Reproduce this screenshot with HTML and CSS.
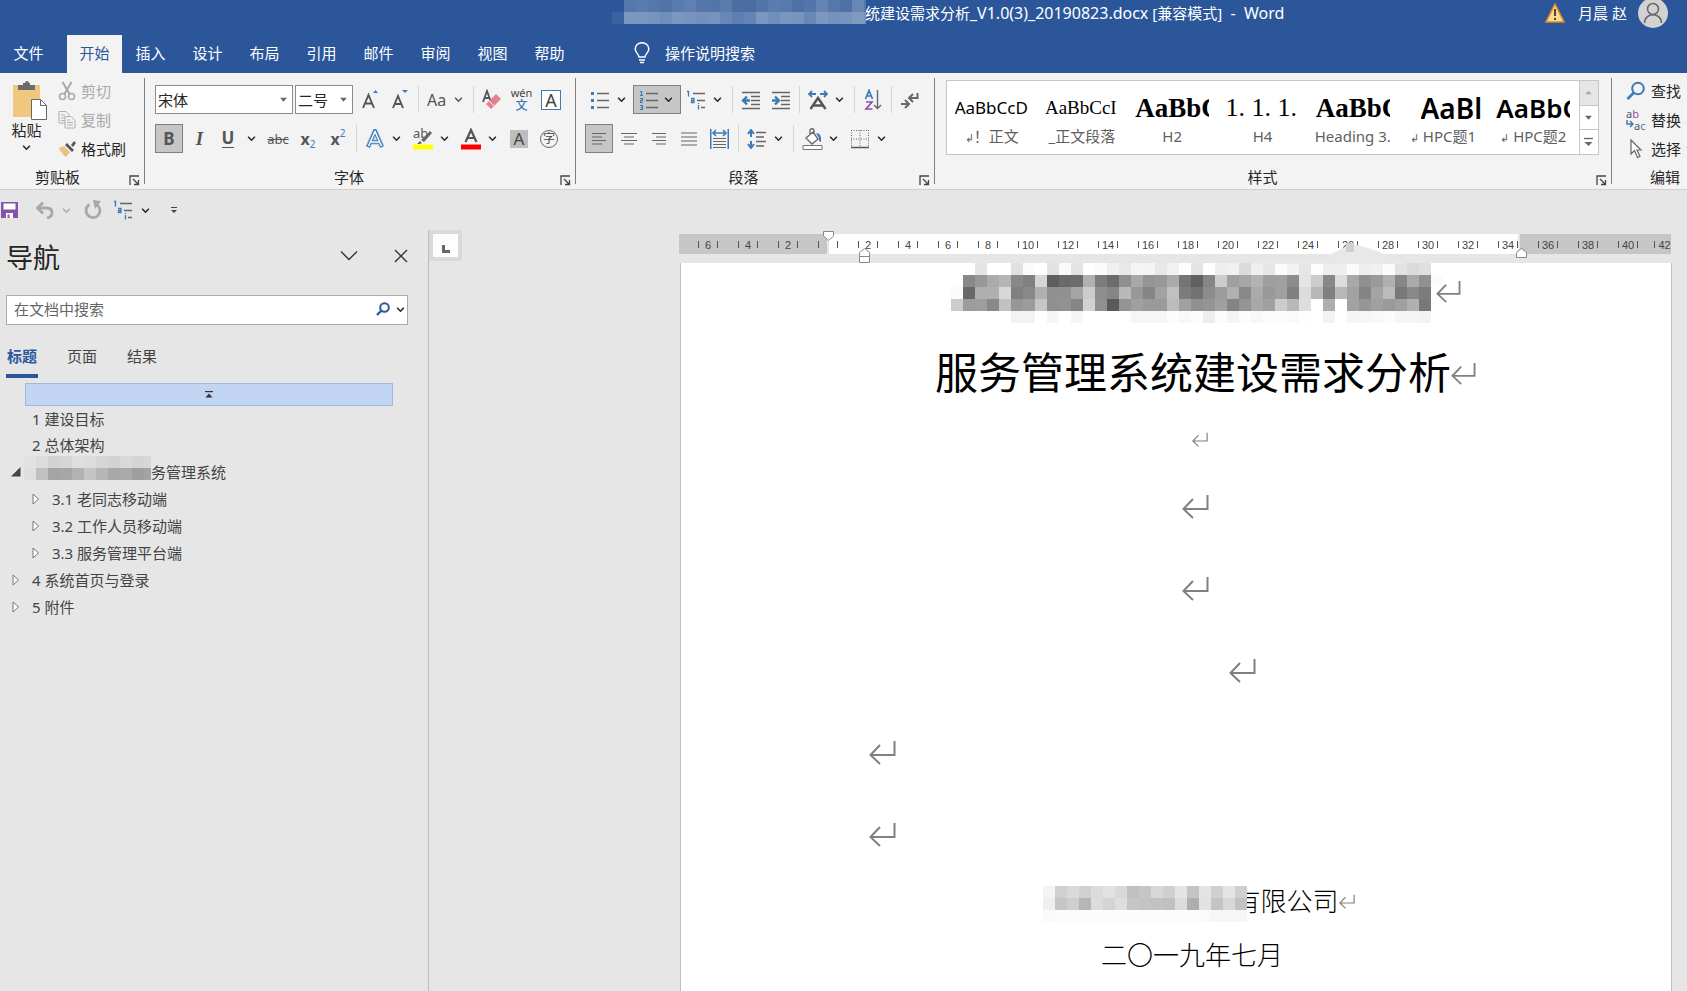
FILE: index.html
```html
<!DOCTYPE html>
<html lang="zh-CN">
<head>
<meta charset="utf-8">
<title>统建设需求分析_V1.0(3)_20190823.docx - Word</title>
<link rel="stylesheet" href="styles.css">
</head>
<body>
<svg class="defs" aria-hidden="true">
  <symbol id="chev" viewBox="0 0 8 8"><path d="M1 2.5l3 3 3-3" fill="none" stroke="currentColor" stroke-width="1.4"/></symbol>
  <symbol id="down" viewBox="0 0 8 8"><path d="M1 2.5h6L4 6z" fill="currentColor"/></symbol>
  <symbol id="launch" viewBox="0 0 11 11"><path d="M1 10V1h9M4 4l5 5M9.5 5v4.5H5" fill="none" stroke="#444" stroke-width="1.3"/></symbol>
  <symbol id="mark" viewBox="0 0 27 25"><path d="M25.500 1v14H2M11 5L1.500 15l9.500 9" fill="none" stroke="#808080" stroke-width="2"/></symbol>
  <symbol id="multi" viewBox="0 0 20 20"><path d="M7 3.500h12M11 10.500h8M15 17.500h4" stroke="#666" stroke-width="1.300"/><path d="M1 1.500h1.500v5M5 8.500h3v4H5.500v-2H8M12.500 15v4.500M12.500 13v1" fill="none" stroke="#3f7ab5" stroke-width="1.300"/></symbol>
  <symbol id="tri" viewBox="0 0 8 12"><path d="M1 1l5.500 5L1 11z" fill="#fff" stroke="#777"/></symbol>
  <symbol id="lens" viewBox="0 0 20 20"><circle cx="12" cy="7.500" r="5.800" fill="none" stroke="currentColor" stroke-width="2"/><path d="M8 11.500L1.500 18" stroke="currentColor" stroke-width="2.600"/></symbol>
</svg>

<header class="titlebar">
  <svg class="mosaic title-mosaic" data-mosaic="title" width="254" height="26" aria-hidden="true"></svg>
  <h1 class="doc-name">统建设需求分析<span>_V1.0(3)_20190823.docx</span> [兼容模式]<span>&nbsp; -&nbsp; Word</span></h1>
  <div class="account">
    <svg width="20" height="20" viewBox="0 0 20 20"><path d="M10 1L19 19H1z" fill="#fbd98c" stroke="#e08a2c" stroke-width="1.600"/><path d="M10 6v7M10 15v2" stroke="#333" stroke-width="1.800"/></svg>
    <span>月晨 赵</span>
    <svg class="avatar" width="30" height="30" viewBox="0 0 30 30"><circle cx="15" cy="15" r="15" fill="#d2d2d2"/><circle cx="15" cy="11" r="5.500" fill="none" stroke="#666" stroke-width="1.500"/><path d="M6.500 25c0-11 17-11 17 0" fill="none" stroke="#666" stroke-width="1.500"/></svg>
  </div>
</header>

<nav class="tabs">
  <button class="tab file">文件</button>
  <button class="tab active">开始</button>
  <button class="tab">插入</button>
  <button class="tab">设计</button>
  <button class="tab">布局</button>
  <button class="tab">引用</button>
  <button class="tab">邮件</button>
  <button class="tab">审阅</button>
  <button class="tab">视图</button>
  <button class="tab">帮助</button>
  <button class="tell">
    <svg width="16" height="22" viewBox="0 0 16 22"><path d="M5 15c0-3-3.800-4-3.800-8a6.800 6.300 0 0 1 13.600 0c0 4-3.800 5-3.800 8zM5 18h6M6 20.500h4" fill="none" stroke="#fff" stroke-width="1.500"/></svg>
    操作说明搜索
  </button>
</nav>

<section class="ribbon">
  <div class="group clip">
    <div class="clip-body">
      <button class="paste">
        <svg width="36" height="40" viewBox="0 0 36 40"><path d="M1 4h27v32H1z" fill="#efc77d"/><path d="M6 9V4h5V2h2q0-2 2-2h0q2 0 2 2h1v2h5v5z" fill="#6b6b6b"/><path d="M19.500 18.500h9l6 6v14h-15z" fill="#fff" stroke="#666"/><path d="M28.500 18.500v6h6" fill="none" stroke="#666"/></svg>
        <span>粘贴</span>
        <svg width="9" height="9"><use href="#chev"/></svg>
      </button>
      <div class="clip-list">
        <button class="line off"><svg width="18" height="20" viewBox="0 0 18 20"><path d="M4.500 1l7 12M13.500 1l-7 12" stroke="#a9a9a9" stroke-width="2"/><circle cx="4.500" cy="15.500" r="3" fill="none" stroke="#a9a9a9" stroke-width="1.600"/><circle cx="13.500" cy="15.500" r="3" fill="none" stroke="#a9a9a9" stroke-width="1.600"/></svg>剪切</button>
        <button class="line off"><svg width="18" height="20" viewBox="0 0 18 20"><path d="M1 1.500h7l3 3V13H1zM3 5h4M3 8h5M3 10.500h5" fill="#f3f3f3" stroke="#b3adb5"/><path d="M7 6.500h6l4 4V18H7zM9 10h3M9 12.500h6M9 15h6" fill="#f3f3f3" stroke="#b3adb5"/></svg>复制</button>
        <button class="line"><svg width="18" height="18" viewBox="0 0 18 18"><path d="M1 8l5-2 6 6-4 5q-2-1-3-3l-1 0 0-2-2-1z" fill="#eac282"/><path d="M7 5l2-2 7 7-2 2zM13 5l3-4 2 2-3 4z" fill="#555"/></svg>格式刷</button>
      </div>
    </div>
    <footer class="foot"><span>剪贴板</span><button class="launch" aria-label="剪贴板选项"><svg width="11" height="11"><use href="#launch"/></svg></button></footer>
  </div>

  <div class="group font">
    <div class="row">
      <label class="combo wide"><input value="宋体" aria-label="字体名称"><svg width="9" height="9"><use href="#down"/></svg></label>
      <label class="combo"><input value="二号" aria-label="字号"><svg width="9" height="9"><use href="#down"/></svg></label>
      <button class="tool w30" aria-label="增大字号"><svg width="20" height="22" viewBox="0 0 20 22"><path d="M2 19L7.500 6 13 19M4 14.500h7" fill="none" stroke="#555" stroke-width="1.900"/><path d="M12 4l2.500-3L17 4z" fill="#3f7ab5"/></svg></button>
      <button class="tool" aria-label="减小字号"><svg width="20" height="22" viewBox="0 0 20 22"><path d="M2 19L7 7l5 12M4 15h6" fill="none" stroke="#555" stroke-width="1.900"/><path d="M11 1h6l-3 3z" fill="#3f7ab5"/></svg></button>
      <i class="sep"></i>
      <button class="split case"><span>Aa</span><svg width="9" height="9"><use href="#chev"/></svg></button>
      <i class="sep"></i>
      <button class="tool w30" aria-label="清除格式"><svg width="20" height="22" viewBox="0 0 20 22"><path d="M1 13L5 2l4 11M2.500 9h5" fill="none" stroke="#555" stroke-width="1.800"/><path d="M4 15L14 5l5 5L9 20z" fill="#e5808f"/><path d="M7 12l5 5" stroke="#f3f3f3"/></svg></button>
      <button class="tool pinyin"><small>wén</small><b>文</b></button>
      <button class="tool w30" aria-label="字符边框"><span class="boxed">A</span></button>
    </div>
    <div class="row">
      <button class="tool on"><b class="g">B</b></button>
      <button class="tool w33"><b class="g ital">I</b></button>
      <button class="tool under"><b class="g">U</b></button>
      <button class="tool w23" aria-label="下划线样式"><svg width="9" height="9"><use href="#chev"/></svg></button>
      <button class="tool w30"><s class="strike">abc</s></button>
      <button class="tool w30"><b class="x">x</b><sub>2</sub></button>
      <button class="tool w30"><b class="x">x</b><sup>2</sup></button>
      <i class="sep"></i>
      <button class="split"><svg width="20" height="20" viewBox="0 0 20 20"><path d="M3 18L10 2l7 16M6 13h8" fill="none" stroke="#b5d0ee" stroke-width="5.500"/><path d="M3 18L10 2l7 16M6 13h8" fill="none" stroke="#3f7ab5" stroke-width="3.600"/><path d="M3.500 17L10 2.500 16.500 17M6 13h8" fill="none" stroke="#fff" stroke-width="1.500"/></svg><svg width="9" height="9"><use href="#chev"/></svg></button>
      <button class="split"><span class="hl">ab<svg width="20" height="22" viewBox="0 0 20 22"><path d="M8 12l9-9 2 2-8 9zM4 16l3-3 2 2-2 1z" fill="#666"/><path d="M0 16.500h20v5H0z" fill="#ff0"/></svg></span><svg width="9" height="9"><use href="#chev"/></svg></button>
      <button class="split"><svg width="20" height="22" viewBox="0 0 20 22"><path d="M4.500 14L10 2l5.500 12M6.500 10h7" fill="none" stroke="#555" stroke-width="2.200"/><path d="M0 16.500h20v5H0z" fill="red"/></svg><svg width="9" height="9"><use href="#chev"/></svg></button>
      <button class="tool w30"><span class="shade">A</span></button>
      <button class="tool w30"><span class="ring">字</span></button>
    </div>
    <footer class="foot"><span>字体</span><button class="launch" aria-label="字体选项"><svg width="11" height="11"><use href="#launch"/></svg></button></footer>
  </div>

  <div class="group para">
    <div class="row">
      <button class="split" aria-label="项目符号"><svg width="20" height="20" viewBox="0 0 20 20"><path d="M7 3.500h12M7 10.500h12M7 17.500h12" stroke="#666" stroke-width="1.300"/><path d="M1 2h3v3H1zM1 9h3v3H1zM1 16h3v3H1z" fill="#3f7ab5"/></svg><svg width="9" height="9"><use href="#chev"/></svg></button>
      <button class="split on" aria-label="编号"><svg width="20" height="20" viewBox="0 0 20 20"><path d="M7 3.500h12M7 10.500h12M7 17.500h12" stroke="#666" stroke-width="1.300"/><path d="M1 1.500h1.500v4M1 5.500h3M1 8.500h2.500v2H1.500v2H4M1 15.500h2.500v4H1M1.500 17.500h2" fill="none" stroke="#3f7ab5" stroke-width="1.200"/></svg><svg width="9" height="9"><use href="#chev"/></svg></button>
      <button class="split" aria-label="多级列表"><svg width="20" height="20"><use href="#multi"/></svg><svg width="9" height="9"><use href="#chev"/></svg></button>
      <i class="sep"></i>
      <button class="tool w30" aria-label="减少缩进"><svg width="20" height="20" viewBox="0 0 20 20"><path d="M1 2.500h18M10 6.500h9M10 10.500h9M10 14.500h9M1 18.500h18" stroke="#666" stroke-width="1.300"/><path d="M9 10.500H3M6 6.500l-4 4 4 4" fill="none" stroke="#3f7ab5" stroke-width="2.400"/></svg></button>
      <button class="tool w30" aria-label="增加缩进"><svg width="20" height="20" viewBox="0 0 20 20"><path d="M1 2.500h18M10 6.500h9M10 10.500h9M10 14.500h9M1 18.500h18" stroke="#666" stroke-width="1.300"/><path d="M1 10.500h6M4 6.500l4 4-4 4" fill="none" stroke="#3f7ab5" stroke-width="2.400"/></svg></button>
      <i class="sep"></i>
      <button class="split" aria-label="中文版式"><svg width="20" height="20" viewBox="0 0 20 20"><path d="M2.500 19L10 8l7.500 11M5 15.500h10" fill="none" stroke="#555" stroke-width="2.400"/><path d="M1 4h7M12 4h7M4 1L1 4l3 3M16 1l3 3-3 3" fill="none" stroke="#3f7ab5" stroke-width="1.800"/></svg><svg width="9" height="9"><use href="#chev"/></svg></button>
      <i class="sep"></i>
      <button class="tool w30" aria-label="排序"><svg width="18" height="22" viewBox="0 0 18 22"><path d="M1.500 10L5 1.500 8.500 10M2.500 7h5" fill="none" stroke="#3f7ab5" stroke-width="1.700"/><path d="M2 13h6l-6 7h6.500" fill="none" stroke="#8e4fa8" stroke-width="1.700"/><path d="M13.500 1v18M10 16l3.500 3.500L17 16" fill="none" stroke="#666" stroke-width="1.400"/></svg></button>
      <i class="sep"></i>
      <button class="tool w30" aria-label="显示编辑标记"><svg width="18" height="18" viewBox="0 0 18 18"><path d="M16.500 2v5H9M12 3L8 7l4 4M0 13h7M4 9l4 4-4 4" fill="none" stroke="#666" stroke-width="2"/></svg></button>
    </div>
    <div class="row aligns">
      <button class="tool on" aria-label="左对齐"><svg width="16" height="14" viewBox="0 0 16 14"><path d="M1 1.500h14M1 5h10M1 8.500h14M1 12h10" stroke="#666" stroke-width="1.200"/></svg></button>
      <button class="tool" aria-label="居中"><svg width="16" height="14" viewBox="0 0 16 14"><path d="M0 1.500h16M3 5h10M0 8.500h16M3 12h10" stroke="#666" stroke-width="1.200"/></svg></button>
      <button class="tool" aria-label="右对齐"><svg width="16" height="14" viewBox="0 0 16 14"><path d="M1 1.500h14M5 5h10M1 8.500h14M5 12h10" stroke="#666" stroke-width="1.200"/></svg></button>
      <button class="tool" aria-label="两端对齐"><svg width="16" height="14" viewBox="0 0 16 14"><path d="M0 1h16M0 5h16M0 9h16M0 13h16" stroke="#666" stroke-width="1.200"/></svg></button>
      <button class="tool" aria-label="分散对齐"><svg width="19" height="20" viewBox="0 0 19 20"><path d="M.7 0v20M18.300 0v20M3 4h13M6 1L3 4l3 3M13 1l3 3-3 3" fill="none" stroke="#3f7ab5" stroke-width="1.600"/><path d="M3 9.500h13M3 12.500h13M3 15.500h13M3 18.500h13" stroke="#666" stroke-width="1.200"/></svg></button>
      <i class="sep"></i>
      <button class="split" aria-label="行距"><svg width="20" height="20" viewBox="0 0 20 20"><path d="M4 2v6M4 12v6M1 5l3-4 3 4M1 15l3 4 3-4" fill="none" stroke="#3f7ab5" stroke-width="2"/><path d="M9 3.500h10M9 8h8M9 12.500h10M9 17h8" stroke="#666" stroke-width="1.300"/></svg><svg width="9" height="9"><use href="#chev"/></svg></button>
      <i class="sep"></i>
      <button class="split" aria-label="底纹"><svg width="21" height="22" viewBox="0 0 21 22"><path d="M1 17.500h19v4H1z" fill="#fff" stroke="#777"/><path d="M4 10l7-6 5 7-6 5zM8 7V2q2-2.500 4 0v3" fill="#fff" stroke="#666" stroke-width="1.300"/><path d="M14 5q6 0 5 9-3-1-2-4z" fill="#3f7ab5"/></svg><svg width="9" height="9"><use href="#chev"/></svg></button>
      <button class="split" aria-label="边框"><svg width="20" height="20" viewBox="0 0 20 20"><path d="M1.500 1v17M10 1v17M18.500 1v17M1 1.500h18M1 10h18" stroke="#666" stroke-width="1" stroke-dasharray="1 1.500"/><path d="M1 18.500h18" stroke="#555" stroke-width="1.500"/></svg><svg width="9" height="9"><use href="#chev"/></svg></button>
    </div>
    <footer class="foot"><span>段落</span><button class="launch" aria-label="段落选项"><svg width="11" height="11"><use href="#launch"/></svg></button></footer>
  </div>

  <div class="group styles">
    <div class="gallery">
      <button class="style"><span class="sample">AaBbCcD</span><span class="name"><i class="ret">↲</i>！正文</span></button>
      <button class="style"><span class="sample serif">AaBbCcI</span><span class="name">_正文段落</span></button>
      <button class="style"><span class="sample serif big">AaBbC</span><span class="name">H2</span></button>
      <button class="style"><span class="sample serif num">1. 1. 1.</span><span class="name">H4</span></button>
      <button class="style"><span class="sample serif big">AaBbC</span><span class="name">Heading 3.</span></button>
      <button class="style"><span class="sample sans big2">AaBl</span><span class="name"><i class="ret">↲</i> HPC题1</span></button>
      <button class="style"><span class="sample sans">AaBbC</span><span class="name"><i class="ret">↲</i> HPC题2</span></button>
      <div class="scroll">
        <button class="dim" aria-label="上一行"><svg width="9" height="9" viewBox="0 0 8 8"><path d="M1 5.500h6L4 2.500z" fill="#aaa"/></svg></button>
        <button aria-label="下一行"><svg width="9" height="9"><use href="#down"/></svg></button>
        <button aria-label="更多样式"><svg width="11" height="10" viewBox="0 0 11 10"><path d="M1 1.500h9" stroke="#666" stroke-width="1.300"/><path d="M1.500 5h8l-4 4z" fill="#666"/></svg></button>
      </div>
    </div>
    <footer class="foot"><span>样式</span><button class="launch" aria-label="样式选项"><svg width="11" height="11"><use href="#launch"/></svg></button></footer>
  </div>

  <div class="group edit">
    <button class="line"><svg class="blue" width="20" height="20"><use href="#lens"/></svg>查找</button>
    <button class="line"><span class="swap"><span>a<em>b</em></span><span><svg width="8" height="8" viewBox="0 0 8 8"><path d="M1 0v4h5M4 1l3 3-3 3" fill="none" stroke="#3f7ab5" stroke-width="1.500"/></svg>a<u>c</u></span></span>替换</button>
    <button class="line"><svg width="20" height="20" viewBox="0 0 20 20"><path d="M5 1v14l3.500-3.500 3 7 2.500-1-3-6.500h4z" fill="#fff" stroke="#666" stroke-width="1.200"/></svg>选择<svg width="9" height="9"><use href="#chev"/></svg></button>
    <footer class="foot"><span>编辑</span></footer>
  </div>
</section>

<div class="quick">
  <button aria-label="保存"><svg width="17" height="18" viewBox="0 0 17 18"><path d="M0 1h17v16H0z" fill="#8455a8"/><path d="M2.500 2.500h12v6h-12zM5 12h7v5H5z" fill="#fff"/><path d="M6.500 13.500h2V17h-2z" fill="#8455a8"/></svg></button>
  <button class="undo" aria-label="撤消"><svg width="20" height="18" viewBox="0 0 20 18"><path d="M3 7h9q5 0 5 5 0 4-5 5M8 1.500L2.500 7 8 12.500" fill="none" stroke="#a8a8a8" stroke-width="2.800"/></svg><svg class="fade" width="9" height="9"><use href="#chev"/></svg></button>
  <button class="redo" aria-label="重复"><svg width="18" height="20" viewBox="0 0 18 20"><path d="M5.500 4.500a7 7 0 1 0 7.500.3" fill="none" stroke="#a8a8a8" stroke-width="2.800"/><path d="M9 0l8 1-6 8z" fill="#a8a8a8"/></svg></button>
  <button class="multi" aria-label="多级列表"><svg width="20" height="20"><use href="#multi"/></svg><svg width="9" height="9"><use href="#chev"/></svg></button>
  <button class="more" aria-label="自定义快速访问工具栏"><svg width="8" height="8" viewBox="0 0 8 8"><path d="M1 1.500h6" stroke="#444"/><path d="M1 4h6L4 7z" fill="#444"/></svg></button>
</div>

<main class="work">
  <aside class="pane">
    <div class="pane-head">
      <h2>导航</h2>
      <button aria-label="任务窗格选项"><svg width="18" height="12" viewBox="0 0 18 12"><path d="M1 1.500l8 8 8-8" fill="none" stroke="#333" stroke-width="1.400"/></svg></button>
      <button aria-label="关闭"><svg width="14" height="14" viewBox="0 0 14 14"><path d="M1 1l12 12M13 1L1 13" stroke="#333" stroke-width="1.400"/></svg></button>
    </div>
    <label class="search">
      <input type="text" placeholder="在文档中搜索" aria-label="在文档中搜索">
      <svg class="navy" width="14" height="14" viewBox="0 0 14 14"><circle cx="8.500" cy="5.500" r="4.300" fill="none" stroke="currentColor" stroke-width="2"/><path d="M5.500 8.500L1 13" stroke="currentColor" stroke-width="2.400"/></svg>
      <svg width="9" height="9"><use href="#chev"/></svg>
    </label>
    <div class="pane-tabs">
      <button class="current">标题</button><button>页面</button><button>结果</button>
    </div>
    <button class="top" aria-label="跳转到文档开头"><svg width="8" height="7" viewBox="0 0 8 7"><path d="M0 .6h8" stroke="#333" stroke-width="1.200"/><path d="M.5 6.500h7L4 2.500z" fill="#333"/></svg></button>
    <ul class="tree">
      <li><i></i><a href="#s1">1 建设目标</a></li>
      <li><i></i><a href="#s2">2 总体架构</a></li>
      <li class="masked"><i><svg width="10" height="10" viewBox="0 0 10 10"><path d="M9.500 0v9.500H0z" fill="#444"/></svg></i><svg class="mosaic" data-mosaic="tree" width="131" height="26" aria-hidden="true"></svg><a href="#s3">务管理系统</a></li>
      <li class="sub"><i><svg width="8" height="12"><use href="#tri"/></svg></i><a href="#s31">3.1 老同志移动端</a></li>
      <li class="sub"><i><svg width="8" height="12"><use href="#tri"/></svg></i><a href="#s32">3.2 工作人员移动端</a></li>
      <li class="sub"><i><svg width="8" height="12"><use href="#tri"/></svg></i><a href="#s33">3.3 服务管理平台端</a></li>
      <li><i><svg width="8" height="12"><use href="#tri"/></svg></i><a href="#s4">4 系统首页与登录</a></li>
      <li><i><svg width="8" height="12"><use href="#tri"/></svg></i><a href="#s5">5 附件</a></li>
    </ul>
  </aside>
  <div class="corner"><button aria-label="制表符"><svg width="8" height="8" viewBox="0 0 8 8"><path d="M1.500 0v6.500H8" fill="none" stroke="#666" stroke-width="3"/></svg></button></div>
  <section class="canvas">
    <div class="ruler">
      <div class="scale" id="scale"></div>
      <svg class="pin first" width="11" height="10" viewBox="0 0 11 10"><path d="M.5.5h10V5l-5 4.500L.5 5z" fill="#fff" stroke="#888"/></svg>
      <svg class="pin hang" width="11" height="15" viewBox="0 0 11 15"><path d="M.5 8.500v-4L5.500.5l5 4v10H.5v-6h10" fill="#fff" stroke="#888"/></svg>
      <svg class="pin right" width="11" height="10" viewBox="0 0 11 10"><path d="M.5 9.500V4.500l5-4 5 4v5z" fill="#fff" stroke="#888"/></svg>
      <svg class="smudge" width="156" height="22" viewBox="0 0 156 22" aria-hidden="true"><path d="M0 22l12-4h68v-5l22-11q22 3 54 20z" fill="#e8e8e8"/><path d="M97 1h8v9h-8z" fill="#d0d0d0"/></svg>
    </div>
    <article class="page">
      <p class="masked-title"><svg class="mosaic" data-mosaic="page" width="492" height="60" aria-hidden="true"></svg><svg class="mark m24" aria-hidden="true"><use href="#mark"/></svg></p>
      <p class="heading">服务管理系统建设需求分析<svg class="mark m24"><use href="#mark"/></svg></p>
      <p class="short"><svg class="mark m16"><use href="#mark"/></svg></p>
      <p class="blank inset"><svg class="mark m27"><use href="#mark"/></svg></p>
      <p class="blank inset"><svg class="mark m27"><use href="#mark"/></svg></p>
      <p class="blank indent"><svg class="mark m27"><use href="#mark"/></svg></p>
      <p class="blank start"><svg class="mark m27"><use href="#mark"/></svg></p>
      <p class="blank start"><svg class="mark m27"><use href="#mark"/></svg></p>
      <p class="company"><span class="cover"><svg class="mosaic" data-mosaic="company" width="210" height="36" aria-hidden="true"></svg></span>有限公司<svg class="mark m16"><use href="#mark"/></svg></p>
      <p class="date">二〇一九年七月</p>
    </article>
  </section>
</main>
<script src="app.js"></script>
</body>
</html>
```

FILE: styles.css
```css
* { box-sizing: border-box; }
body {
  margin: 0;
  min-height: 100vh;
  display: flex;
  flex-direction: column;
  background: #e6e6e6;
  color: #262626;
  font: 15px/20px "Noto Sans", "Noto Sans CJK SC", sans-serif;
  overflow-x: hidden;
}
button {
  font: inherit;
  color: inherit;
  background: none;
  border: 0;
  padding: 0;
  display: flex;
  align-items: center;
  justify-content: center;
}
input { font: inherit; color: inherit; border: 0; background: none; padding: 0; min-width: 0; outline: 0; }
svg { flex: none; display: block; }
h1, h2, p, ul { margin: 0; padding: 0; font-weight: 400; }
.defs { position: absolute; width: 0; height: 0; }

/* title bar */
.titlebar { display: flex; height: 35px; background: #2b579a; color: #fff; padding-left: 612px; overflow: hidden; }
.doc-name { font-size: 15px; line-height: 26px; white-space: nowrap; margin-left: -1px; }
.doc-name span { font-size: 16px; }
.title-mosaic { position: relative; z-index: 1; }
.account { margin-left: auto; display: flex; height: 26px; align-items: center; gap: 13px; padding-right: 19px; white-space: nowrap; }
.avatar { margin-left: -2px; }

.tabs { display: flex; height: 38px; background: #2b579a; color: #fff; }
.tab { width: 57px; padding-bottom: 2px; }
.tab.file { margin-right: 10px; }
.tab.active { width: 55px; background: #f3f3f3; color: #2b579a; }
.tell { margin-left: 54px; gap: 15px; padding: 0 0 2px 2px; white-space: nowrap; }

/* ribbon */
.ribbon { display: flex; height: 117px; background: #f3f3f3; border-bottom: 1px solid #d0d0d0; overflow: hidden; }
.group { position: relative; display: flex; flex-direction: column; padding: 12px 10px 0; flex: none; }
.group::after { content: ""; position: absolute; right: 0; top: 5px; bottom: 5px; width: 1px; background: #808080; }
.clip { width: 145px; padding: 3px 0 0 11px; }
.font { width: 431px; }
.para { width: 359px; padding-right: 0; padding-left: 9px; }
.styles { flex: 1; min-width: 0; padding: 7px 13px 0 11px; }
.edit { width: 75px; padding: 3px 0 0 14px; }
.edit::after { display: none; }
.foot { display: flex; margin: auto -10px 2px -10px; height: 20px; align-items: center; text-align: center; }
.foot span { flex: 1; padding-right: 2px; }
.launch { width: 11px; margin: 10px 5px 4px; }
.clip .foot { margin: auto 0 2px -11px; }
.clip .foot span { padding-right: 9px; }
.para .foot { margin-right: 0; }
.styles .foot { margin-right: -13px; }
.edit .foot { margin: auto 0 2px 24px; text-align: left; }
.clip-body { display: flex; gap: 10px; }
.paste { flex-direction: column; justify-content: flex-start; width: 36px; padding-top: 5px; margin-left: 1px; }
.paste span { margin: 0 7px 4px 0; white-space: nowrap; line-height: 18px; }
.paste > svg:last-child { margin-right: 8px; }
.line { gap: 5px; justify-content: flex-start; height: 29px; white-space: nowrap; }
.off { color: #a9a9a9; }
.edit .line { gap: 5px; }
.blue { color: #3f7ab5; }
.swap { width: 20px; font-size: 11px; line-height: 12px; color: #555; text-align: left; }
.swap span { display: flex; }
.swap em { font-style: normal; color: #8e4fa8; }
.swap u { text-decoration: none; color: #3f7ab5; }

.row { display: flex; height: 29px; margin-bottom: 10px; }
.combo { display: flex; width: 58px; align-items: center; background: #fff; border: 1px solid #8c8c8c; padding: 0 4px 0 2px; margin-right: 3px; }
.combo.wide { width: 138px; margin-right: 2px; }
.combo input { flex: 1; width: 0; }
.combo svg { color: #666; }
.tool { width: 29px; flex: none; }
.w33 { width: 33px; }
.w23 { width: 23px; }
.w30 { width: 30px; }
.row .on { background: #c6c6c6; border: 1px solid #7f7f7f; }
.font .on { width: 28px; }
.under { width: 24px; }
.under b { border-bottom: 1px solid #555; }
.sep { width: 1px; height: 27px; margin: 1px 3px; background: #d4d4d4; flex: none; }
.split { width: 48px; flex: none; justify-content: flex-start; gap: 5px; padding-left: 5px; }
.split > svg:last-child { margin-left: auto; margin-right: 7px; }
.case { color: #555; font-size: 16px; }
.pinyin { flex-direction: column; color: #444; }
.pinyin small { font-size: 11px; line-height: 11px; }
.pinyin b { font-size: 12px; line-height: 15px; color: #3f7ab5; font-weight: 500; }
.boxed { border: 1px solid #3f7ab5; width: 20px; height: 20px; line-height: 19px; font-size: 18px; color: #444; background: #fff; }
.g { color: #555; font-size: 17px; line-height: 18px; }
.ital { font-family: "Liberation Serif", serif; font-style: italic; font-size: 19px; }
.strike { font-size: 13px; color: #555; }
.x { color: #555; font-size: 16px; }
.row sub, .row sup { font-size: 10px; line-height: 10px; color: #3f7ab5; vertical-align: baseline; align-self: flex-end; margin-bottom: 4px; }
.row sup { align-self: flex-start; margin: 4px 0 0; }
.hl { position: relative; width: 20px; height: 22px; font-size: 13px; line-height: 10px; color: #555; text-align: left; }
.hl svg { position: absolute; left: 0; top: 0; }
.shade { background: #bdbdbd; width: 18px; height: 18px; line-height: 18px; font-size: 17px; color: #444; }
.ring { border: 1px solid #666; border-radius: 50%; width: 18px; height: 18px; font-size: 12px; line-height: 15px; color: #444; }
.aligns .tool { width: 28px; margin-right: 2px; }

.gallery { display: flex; height: 75px; background: #fff; border: 1px solid #c6c6c6; }
.style { flex: 1; min-width: 0; flex-direction: column; justify-content: flex-start; padding: 13px 8px 0 7px; overflow: hidden; }
.sample { width: 74px; height: 29px; line-height: 28px; font-size: 17px; color: #000; overflow: hidden; white-space: nowrap; text-align: left; }
.serif { font-family: "Liberation Serif", serif; font-size: 19px; }
.big { font-weight: 700; font-size: 27px; }
.num { font-size: 26px; }
.sans { font-family: "Noto Sans", sans-serif; font-weight: 600; font-size: 26px; }
.big2 { font-size: 28px; width: 60px; margin-left: 15px; }
.name { color: #5f5f5f; white-space: nowrap; line-height: 26px; }
.ret { font-style: normal; font-size: 11px; }
.scroll { display: flex; flex-direction: column; width: 19px; border-left: 1px solid #c6c6c6; color: #666; }
.scroll button { flex: 1; border-bottom: 1px solid #c6c6c6; }
.scroll button:last-child { border-bottom: 0; }
.dim { background: #e6e6e6; }

/* quick access */
.quick { display: flex; height: 40px; padding-left: 1px; align-items: center; }
.undo { margin-left: 17px; gap: 7px; }
.fade { color: #aaa; }
.redo { margin-left: 13px; }
.multi { margin-left: 11px; gap: 8px; }
.more { margin-left: 20px; }

/* navigation pane */
.work { flex: 1; display: flex; }
.pane { width: 429px; flex: none; border-right: 1px solid #bcbcbc; padding: 0 20px 0 6px; }
.pane-head { display: flex; align-items: center; height: 52px; }
.pane-head h2 { flex: 1; font-size: 27px; line-height: 52px; padding-top: 4px; }
.pane-head button + button { margin-left: 36px; }
.search { display: flex; align-items: center; height: 30px; margin-top: 13px; padding: 0 2px 2px 7px; background: #fff; border: 1px solid #ababab; gap: 6px; }
.search input { flex: 1; }
.search input::placeholder { color: #666; opacity: 1; }
.navy { color: #2b579a; }
.pane-tabs { display: flex; gap: 28px; margin-top: 17px; color: #444; }
.pane-tabs button { width: 32px; height: 36px; padding-bottom: 5px; border-bottom: 4px solid transparent; }
.pane-tabs .current { color: #2b579a; font-weight: 700; border-color: #2b579a; }
.top { width: calc(100% - 34px); height: 23px; margin: 5px 15px 0 19px; background: #c2d5f2; border: 1px solid #9fb9df; }
.tree { list-style: none; margin-left: -6px; }
.tree li { display: flex; height: 27px; align-items: center; }
.tree li:first-child { height: 25px; }
.tree i { width: 32px; padding-left: 12px; display: block; }
.tree .sub i { width: 52px; padding-left: 32px; }
.tree .masked i { width: 20px; padding-left: 11px; }
.tree a { color: #444; text-decoration: none; }
.tree .mosaic { align-self: flex-start; margin-top: -2px; }
.corner { width: 33px; height: 31px; padding: 4px; background: #d9d9d9; flex: none; }
.corner button { width: 25px; height: 23px; background: #fdfdfd; padding-top: 6px; }

/* document */
.canvas { flex: 1; min-width: 0; display: flex; flex-direction: column; padding: 4px 15px 0 217px; }
.ruler { position: relative; height: 29px; margin-right: 1px; }
.scale { display: flex; height: 20px; font: 11px/22px "Liberation Sans", sans-serif; color: #444; padding-left: 9px; background: linear-gradient(90deg, #c6c6c6 148px, #e6e6e6 148px, #e6e6e6 150px, #fff 150px, #fff calc(100% - 153px), #e6e6e6 calc(100% - 153px), #e6e6e6 calc(100% - 151px), #c6c6c6 calc(100% - 151px)); }
.scale span { flex: 0 0 40px; display: flex; align-items: center; justify-content: center; }
.scale span:last-child { flex-basis: 32px; }
.scale b { width: 20px; height: 20px; border: solid #555; border-width: 0 1px; border-image: linear-gradient(transparent 7px, #555 7px, #555 14px, transparent 14px) 1; font-weight: 400; text-align: center; line-height: 22px; }
.scale span:last-child b { border-right-width: 0; }
.pin { position: absolute; }
.first { left: 144px; top: -3px; }
.hang { left: 180px; top: 14px; }
.right { right: 144px; top: 14px; }
.smudge { position: absolute; right: 266px; top: 8px; }
.page { flex: 1; margin-left: 1px; background: #fff; border-left: 1px solid #c0c0c0; border-right: 1px solid #c0c0c0; padding: 0 152px 0 188px; color: #000; text-align: center; overflow: hidden; }
.page p { display: flex; justify-content: center; align-items: center; white-space: nowrap; }
.mark { overflow: visible; }
.m24 { width: 25px; height: 23px; margin-right: -25px; }
.m16 { width: 16px; height: 15px; margin-right: -16px; }
.m27 { width: 27px; height: 25px; margin-right: -27px; }
.page .masked-title { height: 66px; align-items: flex-start; padding-right: 2px; }
.masked-title .mark { margin: 17px -25px 0 -7px; }
.page .heading { height: 88px; font-size: 43px; padding-right: 2px; }
.page .short { height: 48px; padding: 0 4px 4px 0; }
.page .blank { height: 82px; }
.page .inset { padding-right: 24px; }
.page .indent { padding-left: 70px; }
.page .start { justify-content: flex-start; }
.page .company { height: 50px; font-size: 26px; font-weight: 300; padding: 2px 6px 0 0; }
.page .date { height: 58px; font-size: 26px; font-weight: 300; padding: 2px 4px 0 0; }
.cover { width: 191px; position: relative; height: 30px; }
.cover svg { position: absolute; left: 0; top: 0; }
```

FILE: app.js
```js
const SVG = 'http://www.w3.org/2000/svg';

// each mosaic: cell size, origin and rows of two-digit grey levels ("--" is empty)
const mosaics = {
  page: { size: 12, x: 0, rows: [
    '-- -- e4 -- -- e0 fb -- e2 fa e3 -- fb f0 e9 f5 f4 e8 f2 fd e4 -- ee f0 da f0 e6 fc f2 e6 fe ee ee fb ee f0 fb e2 da df',
    '-- 88 98 aa b5 88 80 d5 5e 6a 6c b0 7c 6c 90 a8 95 98 aa 74 60 85 cc 9f a6 b2 9e a0 8c e4 cc 88 dc a8 90 9a b0 86 aa 90 fb',
    'fb 68 af b0 d8 80 88 b0 90 90 a5 cc 8e 85 b8 98 86 a2 c0 7c 72 8c 9c b0 88 aa 98 a0 80 dc b8 80 b8 a2 84 a4 bc 78 88 7c',
    'cc 9c 9e 88 c2 96 9c c6 90 92 86 d2 90 5a 94 a0 9a 9a bc a0 90 94 a0 84 94 a8 a0 cc b8 de -- ae -- a2 96 a0 9a a0 b0 78',
    '-- -- -- -- -- f3 f3 -- f5 -- f5 -- -- -- -- f6 f6 f6 fc f8 fc ee fc f4 fc f8 fc fc fa fe -- f3 -- f5 f6 f8 fb f6 f5 f3'
  ] },
  tree: { size: 12, x: 4, rows: [
    'e2 dc d2 d6 df dc d6 d3 d9 d4 d8',
    'df c0 a4 a6 b2 c4 b6 a8 aa 9e a4'
  ] },
  company: { size: 12, x: 0, rows: [
    'f4 d0 da d0 dc e2 d8 c0 c6 d8 d0 e4 c4 e4 d0 e4 d0',
    'ef c6 ce b6 dc d4 de c6 c4 c2 c0 dc ae e2 c4 d8 c2',
    'fa fc fc fc fc fc fc fc fc fc fc fc fc fa f6 f6 f6'
  ] }
};

function cell(svg, x, y, w, h, fill) {
  const r = document.createElementNS(SVG, 'rect');
  Object.entries({ x, y, width: w, height: h, fill }).forEach(([k, v]) => r.setAttribute(k, v));
  svg.append(r);
}

document.querySelectorAll('[data-mosaic]').forEach(svg => {
  const kind = svg.dataset.mosaic;
  if (kind === 'title') {
    const top = ['42669f', '5578ab', '5a7bae', '5577aa', '5173a8', '5a7bae', '5f80b0', '5476aa', '5375a9', '5a7bae', '4b6fa5', '4a6da4', '5274a8', '5b7caf', '5879ac', '4d70a6', '5375a9', '6584b2', '5577aa', '4f71a7', '6987b5', '5677ab'];
    const low = ['3a62a0', '7b96bf', '7b96bf', '7893bd', '708eba', '7c97c0', '7893bd', '7590bb', '7792bc', '6987b5', '5c7eb0', '6684b3', '7b96bf', '708eba', '7a95be', '7893bd', '6987b5', '7d97c0', '7691bb', '7893bd', '7f99c1', '7691bb'];
    top.forEach((c, i) => { if (i) cell(svg, i * 12, 0, 12, 12, '#' + c); });
    low.forEach((c, i) => cell(svg, i * 12, 12, 12, 12, '#' + c));
    return;
  }
  const m = mosaics[kind];
  m.rows.forEach((row, j) => row.split(' ').forEach((v, i) => {
    if (v !== '--') cell(svg, m.x + i * m.size, j * m.size, m.size, m.size, '#' + v + v + v);
  }));
});

const scale = document.getElementById('scale');
for (let n = -6; n <= 42; n += 2) {
  const item = document.createElement('span');
  const num = document.createElement('b');
  num.textContent = n === 0 ? '' : Math.abs(n);
  item.append(num);
  scale.append(item);
}
```
